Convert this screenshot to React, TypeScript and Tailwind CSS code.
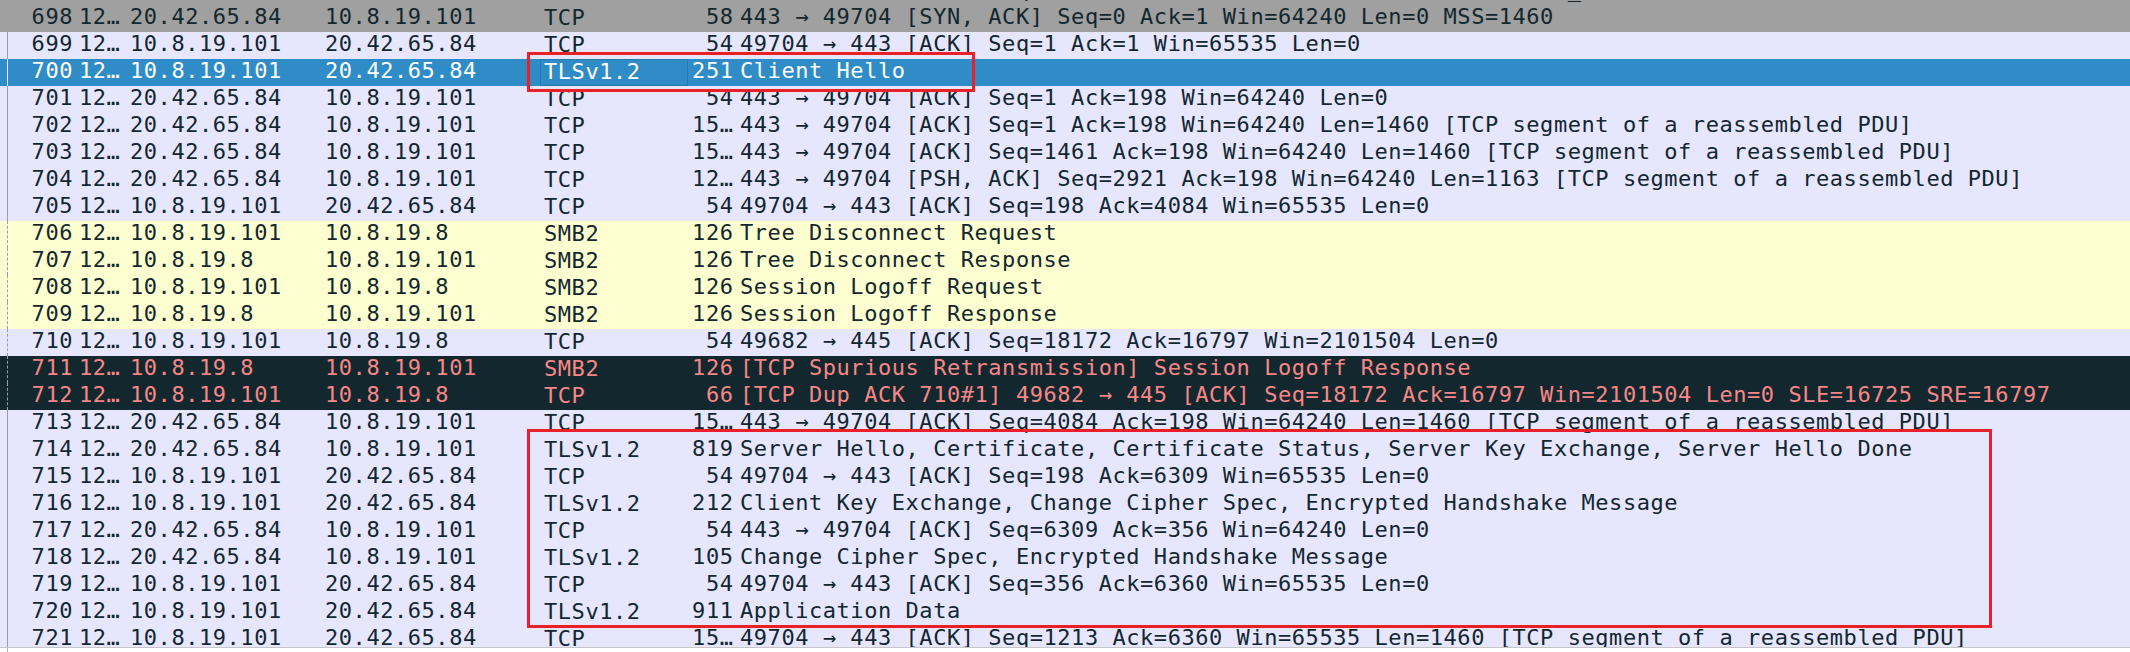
type Kind = "gray" | "tcp" | "smb" | "bad" | "sel";
type Line = "none" | "solid" | "dashed";

type Packet = {
  no: number;
  src: string;
  dst: string;
  proto: string;
  len: string;
  info: string;
  kind: Kind;
  line: Line;
};

const A = "20.42.65.84";
const B = "10.8.19.101";
const C = "10.8.19.8";
const SEG = "[TCP segment of a reassembled PDU]";

const packets: Packet[] = [
  { no: 697, src: B, dst: A, proto: "TCP", len: "66", info: "49704 → 443 [SYN] Seq=0 Win=64240 Len=0 MSS=1460 WS=256 SACK_PERM", kind: "gray", line: "none" },
  { no: 698, src: A, dst: B, proto: "TCP", len: "58", info: "443 → 49704 [SYN, ACK] Seq=0 Ack=1 Win=64240 Len=0 MSS=1460", kind: "gray", line: "none" },
  { no: 699, src: B, dst: A, proto: "TCP", len: "54", info: "49704 → 443 [ACK] Seq=1 Ack=1 Win=65535 Len=0", kind: "tcp", line: "solid" },
  { no: 700, src: B, dst: A, proto: "TLSv1.2", len: "251", info: "Client Hello", kind: "sel", line: "solid" },
  { no: 701, src: A, dst: B, proto: "TCP", len: "54", info: "443 → 49704 [ACK] Seq=1 Ack=198 Win=64240 Len=0", kind: "tcp", line: "solid" },
  { no: 702, src: A, dst: B, proto: "TCP", len: "15…", info: `443 → 49704 [ACK] Seq=1 Ack=198 Win=64240 Len=1460 ${SEG}`, kind: "tcp", line: "solid" },
  { no: 703, src: A, dst: B, proto: "TCP", len: "15…", info: `443 → 49704 [ACK] Seq=1461 Ack=198 Win=64240 Len=1460 ${SEG}`, kind: "tcp", line: "solid" },
  { no: 704, src: A, dst: B, proto: "TCP", len: "12…", info: `443 → 49704 [PSH, ACK] Seq=2921 Ack=198 Win=64240 Len=1163 ${SEG}`, kind: "tcp", line: "solid" },
  { no: 705, src: B, dst: A, proto: "TCP", len: "54", info: "49704 → 443 [ACK] Seq=198 Ack=4084 Win=65535 Len=0", kind: "tcp", line: "solid" },
  { no: 706, src: B, dst: C, proto: "SMB2", len: "126", info: "Tree Disconnect Request", kind: "smb", line: "dashed" },
  { no: 707, src: C, dst: B, proto: "SMB2", len: "126", info: "Tree Disconnect Response", kind: "smb", line: "dashed" },
  { no: 708, src: B, dst: C, proto: "SMB2", len: "126", info: "Session Logoff Request", kind: "smb", line: "dashed" },
  { no: 709, src: C, dst: B, proto: "SMB2", len: "126", info: "Session Logoff Response", kind: "smb", line: "dashed" },
  { no: 710, src: B, dst: C, proto: "TCP", len: "54", info: "49682 → 445 [ACK] Seq=18172 Ack=16797 Win=2101504 Len=0", kind: "tcp", line: "dashed" },
  { no: 711, src: C, dst: B, proto: "SMB2", len: "126", info: "[TCP Spurious Retransmission] Session Logoff Response", kind: "bad", line: "dashed" },
  { no: 712, src: B, dst: C, proto: "TCP", len: "66", info: "[TCP Dup ACK 710#1] 49682 → 445 [ACK] Seq=18172 Ack=16797 Win=2101504 Len=0 SLE=16725 SRE=16797", kind: "bad", line: "dashed" },
  { no: 713, src: A, dst: B, proto: "TCP", len: "15…", info: `443 → 49704 [ACK] Seq=4084 Ack=198 Win=64240 Len=1460 ${SEG}`, kind: "tcp", line: "solid" },
  { no: 714, src: A, dst: B, proto: "TLSv1.2", len: "819", info: "Server Hello, Certificate, Certificate Status, Server Key Exchange, Server Hello Done", kind: "tcp", line: "solid" },
  { no: 715, src: B, dst: A, proto: "TCP", len: "54", info: "49704 → 443 [ACK] Seq=198 Ack=6309 Win=65535 Len=0", kind: "tcp", line: "solid" },
  { no: 716, src: B, dst: A, proto: "TLSv1.2", len: "212", info: "Client Key Exchange, Change Cipher Spec, Encrypted Handshake Message", kind: "tcp", line: "solid" },
  { no: 717, src: A, dst: B, proto: "TCP", len: "54", info: "443 → 49704 [ACK] Seq=6309 Ack=356 Win=64240 Len=0", kind: "tcp", line: "solid" },
  { no: 718, src: A, dst: B, proto: "TLSv1.2", len: "105", info: "Change Cipher Spec, Encrypted Handshake Message", kind: "tcp", line: "solid" },
  { no: 719, src: B, dst: A, proto: "TCP", len: "54", info: "49704 → 443 [ACK] Seq=356 Ack=6360 Win=65535 Len=0", kind: "tcp", line: "solid" },
  { no: 720, src: B, dst: A, proto: "TLSv1.2", len: "911", info: "Application Data", kind: "tcp", line: "solid" },
  { no: 721, src: B, dst: A, proto: "TCP", len: "15…", info: `49704 → 443 [ACK] Seq=1213 Ack=6360 Win=65535 Len=1460 ${SEG}`, kind: "tcp", line: "solid" },
];

const rowColors: Record<Kind, string> = {
  gray: "bg-[#a0a0a0] text-[#12272e]",
  tcp: "bg-[#e7e6ff] text-[#12272e]",
  smb: "bg-[#feffd0] text-[#12272e]",
  bad: "bg-[#12272e] text-[#f78787]",
  sel: "bg-[#308cc6] text-white",
};

function RelatedLine({ line, selected }: { line: Line; selected: boolean }) {
  if (line === "none") return <div className="w-[14px] shrink-0" />;
  const style = line === "dashed" ? "border-dashed" : "border-solid";
  const color = selected ? "border-[#e6eef6]" : "border-[#9c9cae]";
  return (
    <div className="w-[14px] shrink-0">
      <div className={`ml-[7px] h-full border-l ${style} ${color}`} />
    </div>
  );
}

function PacketRow({ p, first }: { p: Packet; first: boolean }) {
  const selected = p.kind === "sel";
  return (
    <div className={`flex h-[27px] shrink-0 leading-[24px] ${first ? "-mt-[22px]" : ""} ${rowColors[p.kind]}`}>
      <RelatedLine line={p.line} selected={selected} />
      <div className="w-[62px] shrink-0 pr-[3px] text-right">{p.no}</div>
      <div className="w-[50px] shrink-0 overflow-hidden whitespace-nowrap pl-[3px]">12…</div>
      <div className="w-[195px] shrink-0 whitespace-nowrap pl-[4px]">{p.src}</div>
      <div className="w-[219px] shrink-0 whitespace-nowrap pl-[4px]">{p.dst}</div>
      <div
        className={`h-[27px] w-[148px] shrink-0 whitespace-nowrap border pl-[3px] ${
          selected ? "border-[#2a78b0]" : "border-transparent"
        }`}
      >
        {p.proto}
      </div>
      <div className="w-[49px] shrink-0 whitespace-nowrap pr-[3.5px] text-right">{p.len}</div>
      <div className="min-w-0 flex-1 overflow-hidden whitespace-nowrap pl-[3px]">{p.info}</div>
    </div>
  );
}

export default function App() {
  return (
    <div className="relative flex h-[652px] w-[2130px] flex-col overflow-hidden bg-white font-['DejaVu_Sans_Mono',monospace] text-[22px] tracking-[0.55px]">
      <div className="flex h-[647px] shrink-0 flex-col overflow-hidden">
        {packets.map((p, i) => (
          <PacketRow key={p.no} p={p} first={i === 0} />
        ))}
      </div>
      <div className="flex-1 border-t border-[#c6c6c6] bg-white">
        <div className="ml-[7px] h-full border-l border-[#b0b0b0]" />
      </div>

      {/* annotation boxes */}
      <div className="pointer-events-none absolute left-[527px] top-[52px] h-[40px] w-[448px] border-[3px] border-[#e8202a]" />
      <div className="pointer-events-none absolute left-[527px] top-[429px] h-[199px] w-[1465px] border-[3px] border-[#e8202a]" />
    </div>
  );
}
